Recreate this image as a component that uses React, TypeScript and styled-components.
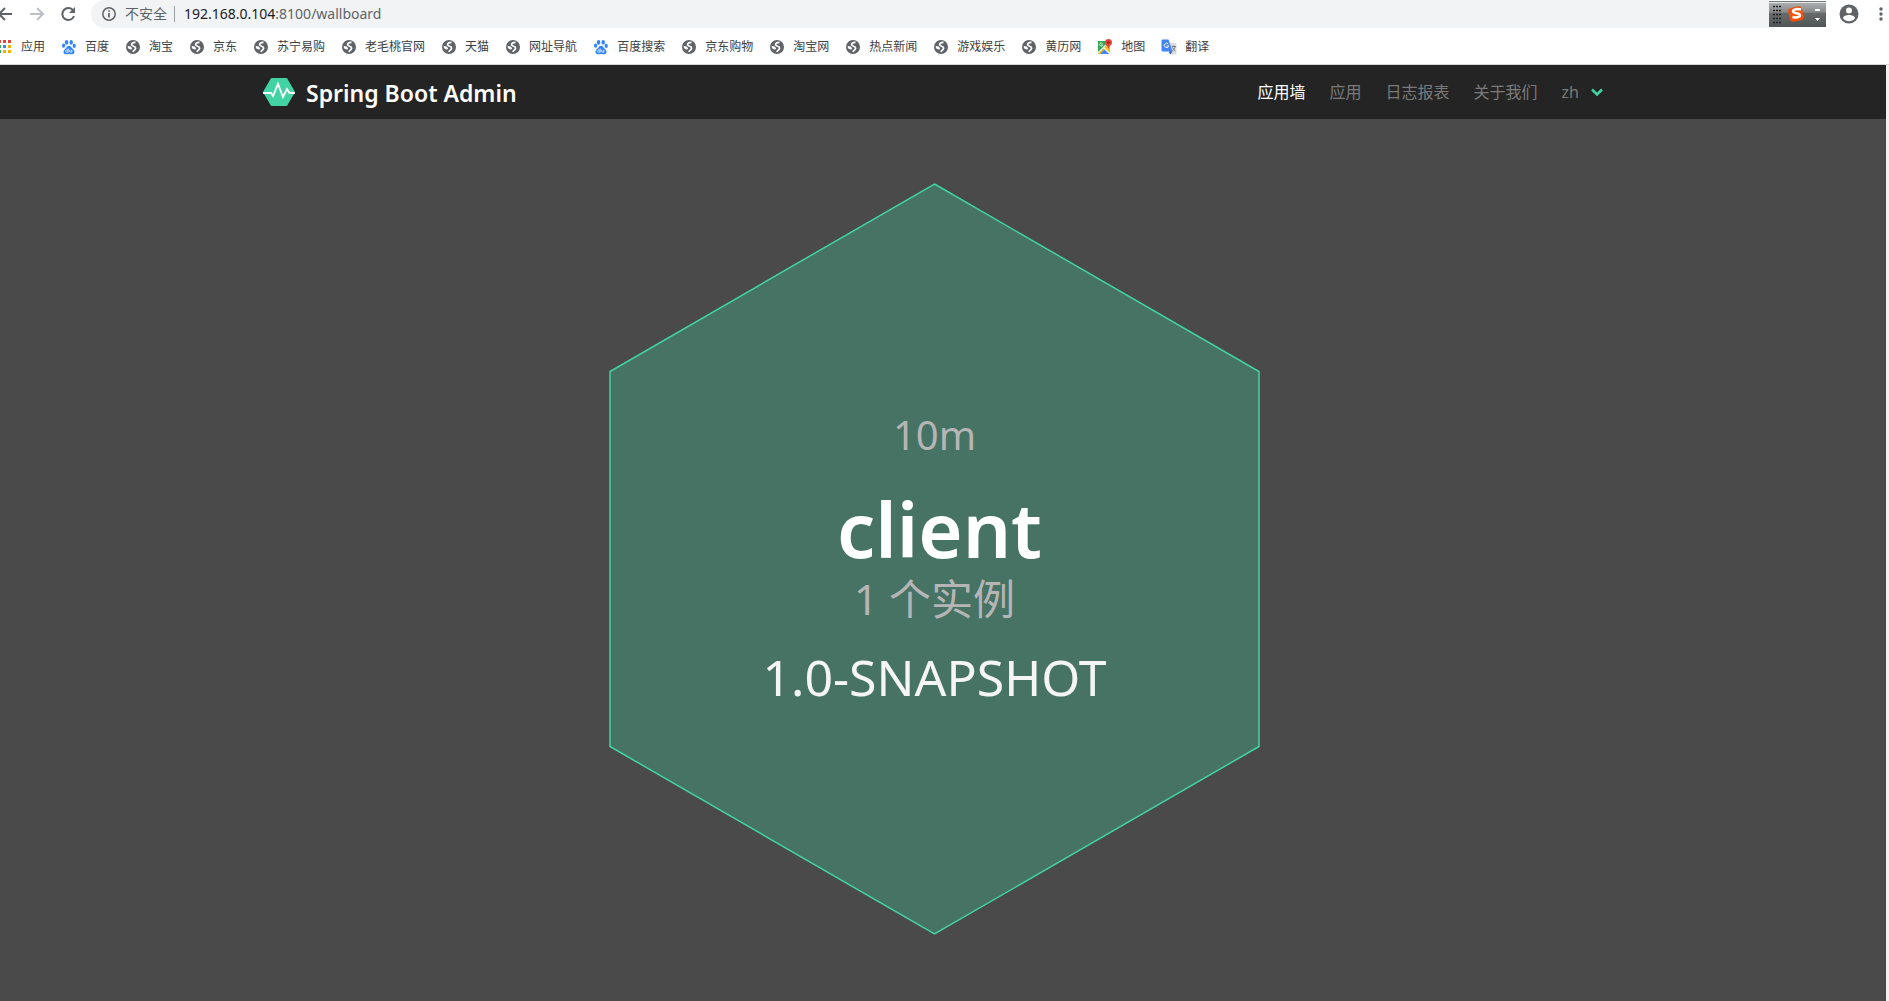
import React from "react";
import styled, { createGlobalStyle } from "styled-components";

const sans = `"Noto Sans", "Noto Sans CJK SC", sans-serif`;

const GlobalStyle = createGlobalStyle`
  * { box-sizing: border-box; }
  html, body, #root { height: 100%; }
  body { margin: 0; overflow: hidden; font-family: ${sans}; background: #f1f1f1; }
  a { color: inherit; text-decoration: none; }
  button { padding: 0; border: 0; background: none; font: inherit; color: inherit; display: flex; }
  svg { display: block; flex: none; }
`;

const Page = styled.div`
  display: flex;
  flex-direction: column;
  height: 100%;
`;

const Toolbar = styled.div`
  display: flex;
  align-items: center;
  height: 28px;
  background: #fff;
  color: #5f6368;
`;

const NavButtons = styled.div`
  display: flex;
  gap: 15px;
  width: 95px;
  margin-left: -4px;
`;

const AddressBar = styled.form`
  display: flex;
  align-items: center;
  flex: 1;
  height: 28px;
  padding-left: 10px;
  border-radius: 14px 0 0 14px;
  background: #f1f3f4;
  font-size: 14px;
  line-height: 20px;
`;

const Security = styled.span`
  margin-left: 8px;
  padding-right: 7px;
  border-right: 1px solid #9aa0a6;
  line-height: 16px;
`;

const Url = styled.a`
  margin-left: 9px;
  strong { font-weight: 400; color: #202124; }
`;

const InputMethod = styled.div`
  display: flex;
  align-items: center;
  width: 57px;
  height: 28px;
`;

const ToolbarEnd = styled.div`
  display: flex;
  align-items: center;
  justify-content: space-between;
  width: 63px;
  padding-left: 13px;
  overflow: hidden;
`;

const Bookmarks = styled.nav`
  display: flex;
  align-items: center;
  gap: 16px;
  height: 37px;
  padding-top: 2px;
  border-bottom: 1px solid #d5d7da;
  background: #fff;
  color: #3c4043;
  font-size: 12px;
  line-height: 16px;
`;

const Bookmark = styled.a<{ $first?: boolean }>`
  display: flex;
  align-items: center;
  gap: ${(p) => (p.$first ? 9 : 8)}px;
  white-space: nowrap;
`;

const Site = styled.div`
  display: flex;
  flex-direction: column;
  flex: 1;
  min-height: 0;
  margin-right: 3px;
  background: #4a4a4a;
`;

const Header = styled.header`
  display: flex;
  justify-content: center;
  height: 54px;
  background: #242424;
`;

const HeaderInner = styled.div`
  display: flex;
  align-items: center;
  justify-content: space-between;
  width: 1340px;
  margin-right: 20px;
`;

const Brand = styled.a`
  display: flex;
  align-items: center;
  gap: 11px;
  color: #fff;
  font-size: 23px;
  font-weight: 600;
  line-height: 32px;
`;

const BrandName = styled.span`
  padding-top: 2px;
`;

const Menu = styled.nav`
  display: flex;
  align-items: center;
  gap: 24px;
  font-size: 16px;
  line-height: 24px;
`;

const MenuLink = styled.a<{ $active?: boolean }>`
  color: ${(p) => (p.$active ? "#fff" : "#7a7a7a")};
`;

const LanguageButton = styled.button`
  && {
    align-items: center;
    gap: 12px;
    color: #7a7a7a;
  }
`;

const Wall = styled.main`
  display: flex;
  align-items: center;
  justify-content: center;
  flex: 1;
  min-height: 0;
  padding: 0 17px 2px 0;
`;

const Tile = styled.a`
  display: grid;
  place-items: center;
  > * { grid-area: 1 / 1; }
`;

const TileText = styled.div`
  display: flex;
  flex-direction: column;
  align-items: center;
  padding-top: 4px;
  text-align: center;
  white-space: nowrap;
`;

const Uptime = styled.span`
  color: #b5b5b5;
  font-size: 40px;
  line-height: 52px;
`;

const AppName = styled.h1`
  margin: 24px 0 0 10px;
  color: #fff;
  font-size: 76px;
  font-weight: 600;
  line-height: 88px;
`;

const Instances = styled(Uptime)`
  font-size: 42px;
`;

const Version = styled.span`
  margin-top: 16px;
  color: #f5f5f5;
  font-size: 50px;
  line-height: 72px;
`;

const Globe = () => (
  <svg width="16" height="16" viewBox="0 0 16 16" aria-hidden="true">
    <circle cx="8" cy="8" r="7" fill="#5f6368" />
    <path d="M10.500 3.300C8 3.200 6.300 4.200 6.600 5.900C7.500 7.800 10.600 6.800 10.600 9.200C10.400 11 8.600 11.200 7.600 12.800" fill="none" stroke="#fff" strokeWidth="1.700" />
    <path d="M2.600 7.200c2.200-.4 3.800.5 4.600 2.300c-.4 1.500-3.600 1-4.300-.7z" fill="#fff" />
  </svg>
);

const Paw = () => (
  <svg width="16" height="16" viewBox="0 0 16 16" fill="#3385ff" aria-hidden="true">
    <ellipse cx="5.600" cy="3.400" rx="1.700" ry="2.300" />
    <ellipse cx="10.200" cy="3.400" rx="1.700" ry="2.300" />
    <ellipse cx="2.600" cy="6.700" rx="1.600" ry="2.100" />
    <ellipse cx="13.200" cy="6.900" rx="1.600" ry="2.100" />
    <path d="M8 6.800c1.800 0 2.300 1.700 3.700 2.900c1.500 1.300 2.300 2.600 1.500 4.200c-1.200 2.200-3.500 1.100-5.200 1.100s-4 1.100-5.200-1.100c-.8-1.600 0-2.900 1.500-4.200c1.400-1.200 1.900-2.900 3.700-2.900z" />
    <path d="M7.200 9.500v3.700H5.700a1 1 0 0 1 0-2.200h1.500M8.800 10.800v1.700q0 .7.700.7h1.300v-2.400" fill="none" stroke="#fff" strokeWidth=".8" />
  </svg>
);

const AppsGrid = () => (
  <svg width="12" height="14" viewBox="0 0 12 14" aria-hidden="true">
    {["#ea4335", "#34a853", "#34a853"].map((c, i) => <rect key={i} x="-2" y={i * 5} width="3" height="3" fill={c} />)}
    {["#ea4335", "#4285f4", "#f9ab00"].map((c, i) => <rect key={i} x="3" y={i * 5} width="3" height="3" fill={c} />)}
    {["#ea4335", "#f9ab00", "#f9ab00"].map((c, i) => <rect key={i} x="8" y={i * 5} width="3" height="3" fill={c} />)}
  </svg>
);

const MapIcon = () => (
  <svg width="16" height="16" viewBox="0 0 16 16" aria-hidden="true">
    <path d="M1 2h12v13H1z" fill="#34a853" />
    <path d="M1 15L13 3v12z" fill="#fbbc04" />
    <path d="M3 15l5-5 5 5z" fill="#4285f4" />
    <path d="M1 14L13 2M7 9l6 6" stroke="#fff" strokeWidth="1.200" />
    <path d="M5.500 4.500a1.600 1.600 0 1 0 .3 1.400H4.500" fill="none" stroke="#fff" strokeWidth=".8" />
    <path d="M11.500 0a3.500 3.500 0 0 1 3.500 3.500c0 2.500-2.700 3-3.500 6.500c-.8-3.500-3.500-4-3.500-6.500A3.500 3.500 0 0 1 11.500 0z" fill="#ea4335" />
    <circle cx="11.500" cy="3.500" r="1.200" fill="#971f16" />
  </svg>
);

const TranslateIcon = () => (
  <svg width="16" height="16" viewBox="0 0 16 16" aria-hidden="true">
    <path d="M6 4h8.500q1 0 1 1v9.500q0 1-1 1H9z" fill="#dadce0" />
    <path d="M1.500.5h6l4 12h-10q-1 0-1-1v-10q0-1 1-1z" fill="#4285f4" />
    <path d="M8 12.500h3.500l-2.500 3z" fill="#1a56c4" />
    <path d="M7.300 5a2.200 2.200 0 1 0 .4 2H5.600" fill="none" stroke="#fff" strokeWidth="1" />
    <path d="M10.500 7.500h4.500M12.700 6.500v1M14 7.800c-.4 2-1.500 3.200-2.800 4.200M11.500 8.500c.6 1.500 1.600 2.500 2.900 3.500" fill="none" stroke="#6b7178" strokeWidth=".9" />
  </svg>
);

const bookmarks: { label: string; Icon: () => React.JSX.Element }[] = [
  { label: "应用", Icon: AppsGrid },
  { label: "百度", Icon: Paw },
  { label: "淘宝", Icon: Globe },
  { label: "京东", Icon: Globe },
  { label: "苏宁易购", Icon: Globe },
  { label: "老毛桃官网", Icon: Globe },
  { label: "天猫", Icon: Globe },
  { label: "网址导航", Icon: Globe },
  { label: "百度搜索", Icon: Paw },
  { label: "京东购物", Icon: Globe },
  { label: "淘宝网", Icon: Globe },
  { label: "热点新闻", Icon: Globe },
  { label: "游戏娱乐", Icon: Globe },
  { label: "黄历网", Icon: Globe },
  { label: "地图", Icon: MapIcon },
  { label: "翻译", Icon: TranslateIcon },
];

const menu = ["应用墙", "应用", "日志报表", "关于我们"];

const SogouBar = () => (
  <svg width="57" height="28" viewBox="0 0 57 28" aria-hidden="true">
    <defs>
      <linearGradient id="metal" x1="0" y1="0" x2="0" y2="1">
        <stop offset="0" stopColor="#b9bcbc" />
        <stop offset=".45" stopColor="#858888" />
        <stop offset=".5" stopColor="#666a6a" />
        <stop offset="1" stopColor="#505555" />
      </linearGradient>
    </defs>
    <rect width="57" height="27" fill="url(#metal)" />
    <path d="M0 .5h57" stroke="#fff" />
    <path d="M0 1.500h57" stroke="#6f7f78" />
    <path d="M0 2.500h57" stroke="#e4e6e6" />
    {[6, 10, 14, 18, 22].map((y) => (
      <path key={y} d={`M4 ${y + 0.5}h9`} stroke="#222" strokeWidth="1.500" strokeDasharray="2 1" />
    ))}
    <rect x="20" y="7" width="14" height="14" rx="3" fill="#f4500c" transform="rotate(-12 27 14)" />
    <path d="M32 9.500c-3-.8-8-.4-8 1.800c0 2.500 7 1.500 7 4c0 2.200-5 2.500-7.500 1.700" fill="none" stroke="#fff" strokeWidth="2.500" />
    <path d="M46 9h5v2h-5zM46 18h5l-2.500 3z" fill="#fff" />
  </svg>
);

export default function App() {
  return (
    <Page>
      <GlobalStyle />
      <Toolbar>
        <NavButtons>
          <button aria-label="后退">
            <svg width="16" height="28" viewBox="0 0 16 28" fill="none" stroke="#5f6368" strokeWidth="2">
              <path d="M16 14H3M9 8l-6 6 6 6" />
            </svg>
          </button>
          <button aria-label="前进">
            <svg width="18" height="28" viewBox="0 0 18 28" fill="none" stroke="#bdc1c6" strokeWidth="2">
              <path d="M3 14h13M10 8l6 6-6 6" />
            </svg>
          </button>
          <button aria-label="重新加载">
            <svg width="16" height="28" viewBox="0 0 16 28" fill="none" stroke="#5f6368" strokeWidth="2">
              <path d="M13.200 10.500A6 6 0 1 0 14 16" />
              <path d="M15 7v6H9z" fill="#5f6368" stroke="none" />
            </svg>
          </button>
        </NavButtons>
        <AddressBar>
          <svg width="16" height="16" viewBox="0 0 16 16" fill="none" stroke="#5f6368" strokeWidth="1.500" aria-hidden="true">
            <circle cx="8" cy="8" r="6.200" />
            <path d="M8 7v4.500M8 4.200v1.600" strokeWidth="1.700" />
          </svg>
          <Security>不安全</Security>
          <Url href="#"><strong>192.168.0.104</strong>:8100/wallboard</Url>
        </AddressBar>
        <InputMethod><SogouBar /></InputMethod>
        <ToolbarEnd>
          <button aria-label="用户">
            <svg width="20" height="20" viewBox="0 0 20 20">
              <circle cx="10" cy="10" r="9.500" fill="#5f6368" />
              <circle cx="10" cy="6.500" r="3" fill="#fff" />
              <path d="M4 14.200c0-2.200 3.500-3.200 6-3.200s6 1 6 3.200a7.300 7.300 0 0 1-12 0z" fill="#fff" />
            </svg>
          </button>
          <button aria-label="菜单">
            <svg width="12" height="16" viewBox="0 0 12 16" fill="#5f6368">
              <circle cx="4" cy="3" r="1.700" /><circle cx="4" cy="8" r="1.700" /><circle cx="4" cy="13" r="1.700" />
            </svg>
          </button>
        </ToolbarEnd>
      </Toolbar>
      <Bookmarks>
        {bookmarks.map(({ label, Icon }, i) => (
          <Bookmark key={label} href="#" $first={i === 0}><Icon />{label}</Bookmark>
        ))}
      </Bookmarks>
      <Site>
        <Header>
          <HeaderInner>
            <Brand href="#">
              <svg width="32" height="28" viewBox="0 0 32 28" aria-hidden="true">
                <path d="M9 0h14q1 0 1.500 1L31.500 13q.5 1 0 2L24.500 27q-.5 1-1.500 1H9q-1 0-1.500-1L.5 15q-.5-1 0-2L7.500 1Q8 0 9 0z" fill="#42d3a5" />
                <path d="M0 15h8l2 3 5-12 5 13 4-8 2.500 4H32" fill="none" stroke="#fff" strokeWidth="1.800" />
              </svg>
              <BrandName>Spring Boot Admin</BrandName>
            </Brand>
            <Menu>
              {menu.map((m, i) => <MenuLink key={m} href="#" $active={i === 0}>{m}</MenuLink>)}
              <LanguageButton>
                zh
                <svg width="12" height="10" viewBox="0 0 12 10" fill="none" stroke="#42d3a5" strokeWidth="2.500">
                  <path d="M1 2.500l5 5 5-5" />
                </svg>
              </LanguageButton>
            </Menu>
          </HeaderInner>
        </Header>
        <Wall>
          <Tile href="#">
            <svg width="651" height="752" viewBox="0 0 651 752" aria-hidden="true">
              <path d="M325.500 1L650 188.500v375L325.500 751 1 563.500v-375z" fill="rgba(66,211,165,.3)" stroke="#42d3a5" strokeWidth="1.500" />
            </svg>
            <TileText>
              <Uptime>10m</Uptime>
              <AppName>client</AppName>
              <Instances>1 个实例</Instances>
              <Version>1.0-SNAPSHOT</Version>
            </TileText>
          </Tile>
        </Wall>
      </Site>
    </Page>
  );
}
